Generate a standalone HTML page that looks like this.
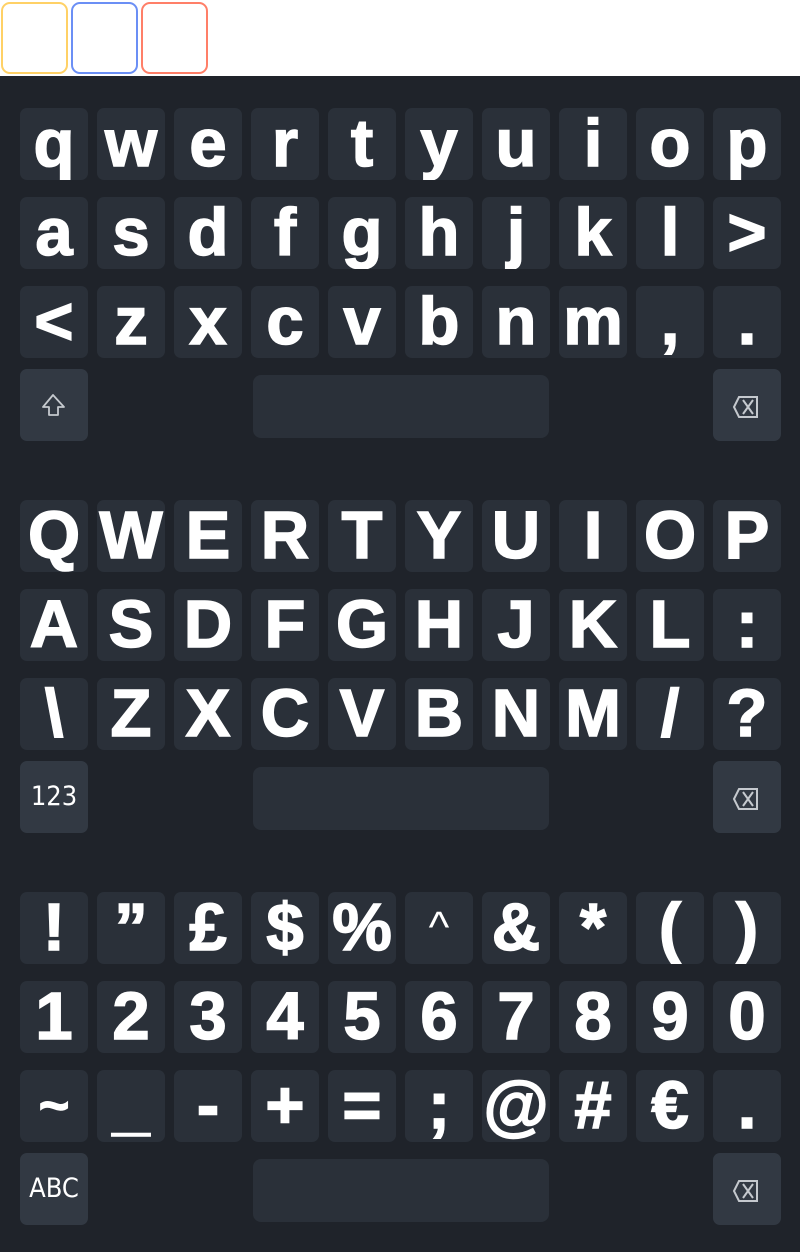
<!DOCTYPE html>
<html><head><meta charset="utf-8"><style>
*{margin:0;padding:0;box-sizing:border-box}
body{width:800px;height:1252px;background:#fff;position:relative;overflow:hidden;font-family:"Liberation Sans",sans-serif}
.box{position:absolute;top:2px;width:67px;height:72px;border:2px solid;border-radius:9px;background:#fff}
.kb{position:absolute;left:0;top:76px;width:800px;height:1176px;background:#1f232a}
.k{position:absolute;width:68px;height:72px;border-radius:7px;background:#2a3039;color:#fff;font-weight:bold;font-size:67px;line-height:72px;text-align:center;-webkit-text-stroke:1.5px #fff;overflow:hidden}
.m{background:#323943;font-weight:normal;font-size:27px;font-family:"DejaVu Sans Condensed","DejaVu Sans",sans-serif;color:#fff;-webkit-text-stroke:0}
.sp{position:absolute;left:253px;width:296px;height:63px;border-radius:8px;background:#2a3039}
.ic{position:absolute;left:0;top:0;width:68px;height:72px}
</style></head><body>
<div class="box" style="left:1px;border-color:#ffd166"></div>
<div class="box" style="left:71px;border-color:#6b8ff5"></div>
<div class="box" style="left:141px;border-color:#ff7f68"></div>
<div class="kb"></div>
<div id="k"></div>
<script>
var rows=[
["qwertyuiop","asdfghjkl>","<zxcvbnm,."],
["QWERTYUIOP","ASDFGHJKL:","\\ZXCVBNM/?"],
["!”£$%^&*()","1234567890","~_-+=;@#€."]];
var h="";
var bs='<svg class="ic" viewBox="0 0 68 72"><path d="M21 38 L26 28 H44 V48 H26 Z" fill="none" stroke="#c5c9ce" stroke-width="2"/><path d="M30 31 L40 45 M40 31 L30 45" stroke="#c5c9ce" stroke-width="2"/></svg>';
var sh='<svg class="ic" viewBox="0 0 68 72"><path d="M33 26 L23 38 H29 V46 H38 V38 H44 Z" fill="none" stroke="#c5c9ce" stroke-width="1.8" stroke-linejoin="round"/></svg>';
for(var s=0;s<3;s++){var y0=108+s*392;
for(var r=0;r<3;r++)for(var c=0;c<10;c++){var ch=rows[s][r][c];
var st='';if(ch=='^')st='font-weight:normal;font-size:44px;-webkit-text-stroke:0;';if(ch=='~')st='font-size:52px;';
h+='<div class="k" style="left:'+(20+c*77)+'px;top:'+(y0+r*89)+'px;'+st+'">'+ch.replace('&','&amp;').replace('<','&lt;').replace('>','&gt;')+'</div>';}
var yb=y0+261;
var lab=s==0?sh:(s==1?'123':'ABC');
h+='<div class="k m" style="left:20px;top:'+yb+'px">'+lab+'</div>';
h+='<div class="sp" style="top:'+(yb+6)+'px"></div>';
h+='<div class="k m" style="left:713px;top:'+yb+'px">'+bs+'</div>';}
document.getElementById('k').innerHTML=h;
</script>
</body></html>
